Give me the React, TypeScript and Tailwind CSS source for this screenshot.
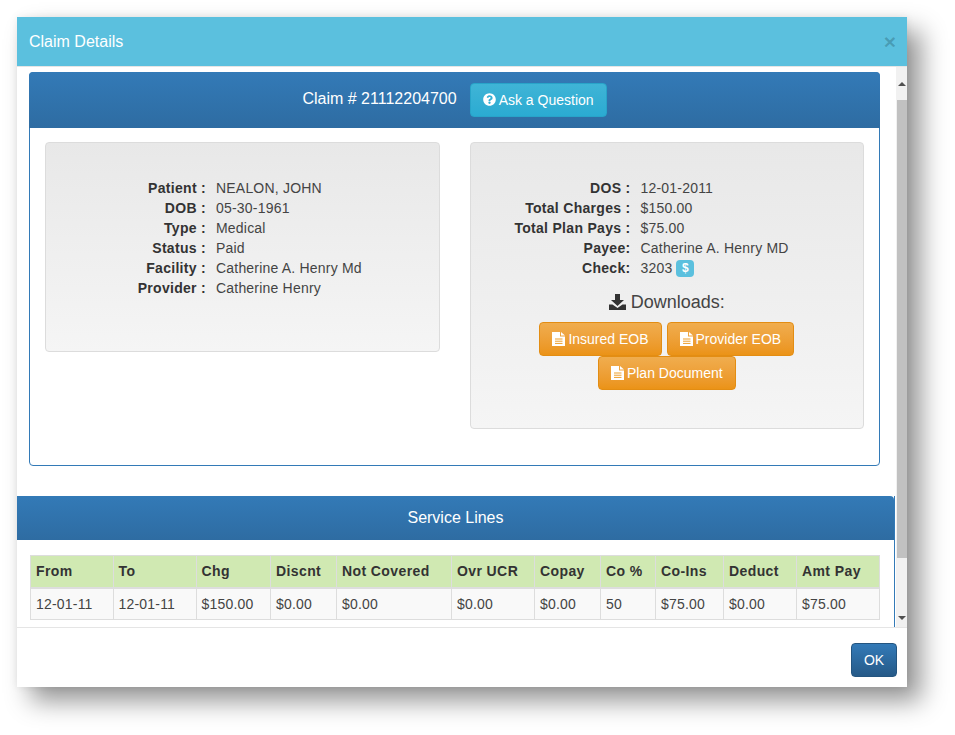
import React from "react";
import { FaQuestionCircle } from "react-icons/fa";

const FileIcon = () => (
  <svg viewBox="0 0 13 14" className="w-[13px] h-[14px] shrink-0" fill="white">
    <path d="M0 0H8V4.5H13V14H0Z" />
    <path d="M9 0L13 3.5H9Z" />
    <rect x="3" y="6.5" width="7.5" height="1" fill="#ee9f2c" />
    <rect x="3" y="8.7" width="7.5" height="1" fill="#ee9f2c" />
    <rect x="3" y="10.9" width="7.5" height="1" fill="#ee9f2c" />
  </svg>
);

const DownloadIcon = () => (
  <svg viewBox="0 0 17 16" className="w-[17px] h-[16px]" fill="#333">
    <path d="M6 0H11V6H15L8.5 12L2 6H6Z" />
    <path d="M0 10.5H3.5L8.5 14L13.5 10.5H17V16H0Z" />
  </svg>
);

function Row({ label, children }: { label: string; children: React.ReactNode }) {
  return (
    <div className="flex h-5 leading-5">
      <div className="w-40 text-right font-bold tracking-[0.3px] text-[#333] shrink-0">{label}</div>
      <div className="ml-[10px] text-[#444] tracking-[0.2px] flex items-center whitespace-nowrap">{children}</div>
    </div>
  );
}

function OrangeButton({ children }: { children: React.ReactNode }) {
  return (
    <button className="h-[34px] flex items-center gap-[3px] px-3 rounded border border-[#e38d13] bg-gradient-to-b from-[#f0ad4e] to-[#eb9316] text-white text-sm whitespace-nowrap">
      <FileIcon />
      {children}
    </button>
  );
}

const cols = [82.5, 83, 74.5, 66, 115, 83, 66, 55, 68, 73, 83];
const heads = ["From", "To", "Chg", "Discnt", "Not Covered", "Ovr UCR", "Copay", "Co %", "Co-Ins", "Deduct", "Amt Pay"];
const vals = ["12-01-11", "12-01-11", "$150.00", "$0.00", "$0.00", "$0.00", "$0.00", "50", "$75.00", "$0.00", "$75.00"];

export default function App() {
  return (
    <div className="bg-white w-[955px] h-[735px] pt-[17px] pl-[17px] overflow-hidden font-['Liberation_Sans',Arial,sans-serif] text-sm text-[#333]">
      <div className="w-[890px] h-[670px] bg-white flex flex-col shadow-[14px_14px_24px_rgba(0,0,0,0.42),0_0_8px_rgba(0,0,0,0.08)]">
        <header className="h-[50px] shrink-0 bg-[#5bc0de] border-b border-[#e5e5e5] flex items-center justify-between pl-3 pr-[11px] text-white">
          <span className="text-base">Claim Details</span>
          <span className="text-[21px] font-bold text-black/20 leading-none">×</span>
        </header>

        <div className="h-[560px] shrink-0 flex overflow-hidden">
          <div className="w-[879px] shrink-0 pt-[5px]">
            <section className="ml-3 w-[851px] h-[394px] border border-[#337ab7] rounded">
              <div className="-m-px h-[56px] rounded-t bg-gradient-to-b from-[#337ab7] to-[#2e6ca2] flex items-center justify-center gap-[13px] text-white text-base">
                <span className="-mt-[3px]">Claim # 21112204700</span>
                <button className="h-[34px] -mt-px px-3 rounded border border-[#28a4c9] bg-gradient-to-b from-[#3fb4d6] to-[#2aabd2] text-white text-sm flex items-center gap-[3px]">
                  <FaQuestionCircle className="text-[13px]" />
                  Ask a Question
                </button>
              </div>
              <div className="grid grid-cols-2 gap-[30px] items-start p-[15px]">
                <div className="h-[210px] pt-[35px] rounded border border-[#dcdcdc] bg-gradient-to-b from-[#e8e8e8] to-[#f5f5f5]">
                  <Row label="Patient :">NEALON, JOHN</Row>
                  <Row label="DOB :">05-30-1961</Row>
                  <Row label="Type :">Medical</Row>
                  <Row label="Status :">Paid</Row>
                  <Row label="Facility :">Catherine A. Henry Md</Row>
                  <Row label="Provider :">Catherine Henry</Row>
                </div>
                <div className="h-[287px] pt-[35px] rounded border border-[#dcdcdc] bg-gradient-to-b from-[#e8e8e8] to-[#f5f5f5]">
                  <Row label="DOS :">12-01-2011</Row>
                  <Row label="Total Charges :">$150.00</Row>
                  <Row label="Total Plan Pays :">$75.00</Row>
                  <Row label="Payee:">Catherine A. Henry MD</Row>
                  <Row label="Check:">
                    3203
                    <span className="ml-1 w-[18px] h-[17px] rounded-sm bg-[#5bc0de] text-white font-bold text-xs flex items-center justify-center">$</span>
                  </Row>
                  <div className="mt-[9px] h-[30px] flex items-center justify-center gap-[5px] text-lg text-[#444]">
                    <DownloadIcon />
                    Downloads:
                  </div>
                  <div className="mt-[5px] flex flex-wrap justify-center gap-x-[5px] px-1">
                    <OrangeButton>Insured EOB</OrangeButton>
                    <OrangeButton>Provider EOB</OrangeButton>
                    <OrangeButton>Plan Document</OrangeButton>
                  </div>
                </div>
              </div>
            </section>

            <section className="mt-[30px] w-[878px] h-[200px] border-r border-[#337ab7]">
              <div className="h-[44px] rounded-tr bg-gradient-to-b from-[#337ab7] to-[#2e6ca2] flex items-center justify-center text-white text-base">
                Service Lines
              </div>
              <table className="ml-[13px] mt-[15px] w-[849px] table-fixed border-collapse text-sm">
                <colgroup>
                  {cols.map((w, i) => (
                    <col key={i} style={{ width: w }} />
                  ))}
                </colgroup>
                <thead>
                  <tr className="h-8 bg-[#d0e9b2]">
                    {heads.map((h) => (
                      <th key={h} className="border border-[#ddd] border-b-2 px-[5px] text-left font-bold tracking-[0.4px] text-[#333] whitespace-nowrap">
                        {h}
                      </th>
                    ))}
                  </tr>
                </thead>
                <tbody>
                  <tr className="h-8 bg-[#f9f9f9]">
                    {vals.map((v, i) => (
                      <td key={i} className="border border-[#ddd] px-[5px] tracking-[0.2px] text-[#444] whitespace-nowrap">
                        {v}
                      </td>
                    ))}
                  </tr>
                </tbody>
              </table>
            </section>
          </div>

          <div className="w-[11px] shrink-0 bg-[#f1f1f1] flex flex-col items-center">
            <div className="h-[33px] w-full flex items-center justify-center">
              <div className="w-0 h-0 border-x-[4px] border-x-transparent border-b-[4px] border-b-[#505050]" />
            </div>
            <div className="h-[458px] w-full bg-[#c1c1c1] ml-[1px]" />
            <div className="flex-1 w-full flex items-end justify-center pb-[7px]">
              <div className="w-0 h-0 border-x-[4px] border-x-transparent border-t-[4px] border-t-[#505050]" />
            </div>
          </div>
        </div>

        <footer className="flex-1 border-t border-[#e5e5e5] flex items-start justify-end pt-[15px] pr-[10px]">
          <button className="h-[34px] w-[46px] rounded border border-[#245580] bg-gradient-to-b from-[#337ab7] to-[#265a88] text-white text-sm">
            OK
          </button>
        </footer>
      </div>
    </div>
  );
}
